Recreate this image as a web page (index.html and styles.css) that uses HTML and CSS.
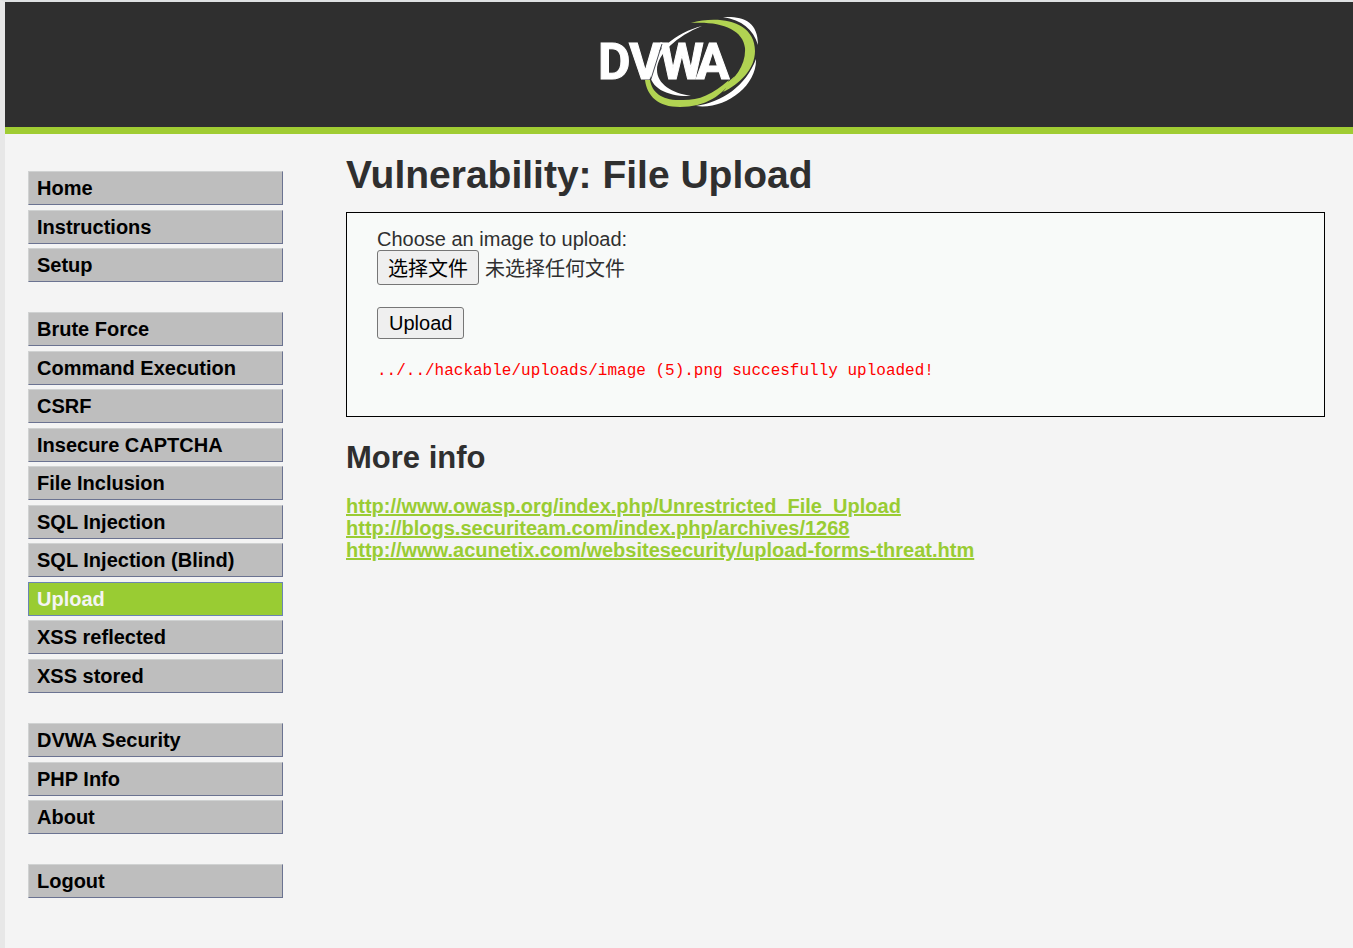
FILE: index.html
```html
<!DOCTYPE html>
<html lang="en">
<head>
<meta charset="utf-8">
<title>DVWA - Vulnerability: File Upload</title>
<link rel="stylesheet" href="styles.css">
</head>
<body>
<header class="header">
  <svg class="logo" viewBox="9 11 162 92" role="img" aria-label="DVWA">
    <path fill="#fff" d="M113 21C88 27 61 48 61 68C61 83 79 92 102 91C83 88 68 79 68 65C68 49 88 31 113 21Z"/>
    <path fill="#b1d352" d="M102 18C130 10 166 16 166 46C166 64 151 79 134 87L137 83L131 85C147 74 157 59 156 43C154 24 131 16 102 18Z"/>
    <path fill="#fff" d="M134 12C154 11 169 16 169 40C164 24 153 15 134 12Z"/>
    <path fill="#b1d352" d="M56 75C58 91 69 102 91 102C116 102 134 91 146 71L139 77L140 75C122 91 108 96 90 95C72 95 63 87 61 75Z"/>
    <path fill="#fff" d="M167 54C168 81 136 105 107 101C133 97 157 81 167 54Z"/>
    <text class="logo-text" x="9 40 71 107" y="74">DVWA</text>
    <path fill="none" stroke="#4a4d55" d="M73 39L62 74"/>
  </svg>
</header>
<div class="layout">
  <nav class="menu">
    <ul class="menu-group">
      <li><a href="#">Home</a></li>
      <li><a href="#">Instructions</a></li>
      <li><a href="#">Setup</a></li>
    </ul>
    <ul class="menu-group">
      <li><a href="#">Brute Force</a></li>
      <li><a href="#">Command Execution</a></li>
      <li><a href="#">CSRF</a></li>
      <li><a href="#">Insecure CAPTCHA</a></li>
      <li><a href="#">File Inclusion</a></li>
      <li><a href="#">SQL Injection</a></li>
      <li><a href="#">SQL Injection (Blind)</a></li>
      <li><a class="selected" href="#" aria-current="page">Upload</a></li>
      <li><a href="#">XSS reflected</a></li>
      <li><a href="#">XSS stored</a></li>
    </ul>
    <ul class="menu-group">
      <li><a href="#">DVWA Security</a></li>
      <li><a href="#">PHP Info</a></li>
      <li><a href="#">About</a></li>
    </ul>
    <ul class="menu-group">
      <li><a href="#">Logout</a></li>
    </ul>
  </nav>
  <main class="content">
    <h1>Vulnerability: File Upload</h1>
    <form class="upload-box">
      <div>Choose an image to upload:</div>
      <div class="file-row">
        <input class="file-input" type="file" id="uploaded">
        <label class="button file-button" for="uploaded">选择文件</label>
        <span class="file-name">未选择任何文件</span>
      </div>
      <button class="button" type="button">Upload</button>
      <pre class="message">../../hackable/uploads/image (5).png succesfully uploaded!</pre>
    </form>
    <h2>More info</h2>
    <ul class="links">
      <li><a href="#">http://www.owasp.org/index.php/Unrestricted_File_Upload</a></li>
      <li><a href="#">http://blogs.securiteam.com/index.php/archives/1268</a></li>
      <li><a href="#">http://www.acunetix.com/websitesecurity/upload-forms-threat.htm</a></li>
    </ul>
  </main>
</div>
</body>
</html>
```
FILE: styles.css
```css
* { box-sizing: border-box; }

body {
  margin: 0;
  min-height: 100vh;
  border-top: 2px solid #dfe1e2;
  border-left: 5px solid #e7e7e7;
  background: #f4f4f4;
  color: #2f2f2f;
  font: 20px/22px "Liberation Sans", "Noto Sans CJK SC", sans-serif;
}

ul { margin: 0; padding: 0; list-style: none; }

.header {
  display: flex;
  justify-content: center;
  padding: 14px 0 19px;
  background: #2f2f2f;
  border-bottom: 7px solid #a0cc33;
}
.logo { width: 162px; height: 92px; }
.logo-text {
  fill: #fff;
  stroke: #fff;
  stroke-width: 1px;
  font: bold 50px Roboto, sans-serif;
}

.layout {
  display: grid;
  grid-template-columns: 255px minmax(0, 1fr);
  column-gap: 63px;
  padding: 20px 28px 20px 23px;
}

.menu {
  display: flex;
  flex-direction: column;
  gap: 30px;
  padding-top: 17px;
}
.menu-group li { margin-bottom: 5px; }
.menu-group li:nth-child(even) { margin-bottom: 4px; }
.menu-group li:last-child { margin-bottom: 0; }
.menu-group a {
  display: block;
  padding: 5px 8px;
  border: 1px solid;
  border-color: #d0d2d2 #6b7391 #6b7391 #d0d2d2;
  background: #bebebe;
  color: #000;
  font-weight: bold;
  text-decoration: none;
}
.menu-group .selected {
  border-color: #6b84b4;
  background: #99cc33;
  color: #f4f4f4;
}

h1, h2 { margin: 0; }
h1 { font-size: 39px; line-height: 42px; }
h2 { margin: 24px 0 20px; font-size: 31px; line-height: 34px; }

.upload-box {
  margin-top: 16px;
  padding: 15px 30px 34px;
  border: 1px solid #000;
  background: #f8faf9;
}
.file-row {
  display: flex;
  align-items: center;
  gap: 6px;
  margin-bottom: 22px;
}
.file-input {
  position: absolute;
  width: 1px;
  height: 1px;
  opacity: 0;
}
.button {
  display: block;
  padding: 4px 11px;
  border: 1px solid #767676;
  border-radius: 3px;
  background: #efefef;
  color: #000;
  font: inherit;
}
.file-button { padding: 7px 10px 4px; }
.file-name { padding-top: 3px; }
.message {
  margin: 21px 0 0;
  color: #ff0000;
  font: 16px/22px "Liberation Mono", monospace;
}
.links a { color: #99cc33; font-weight: bold; }
```
